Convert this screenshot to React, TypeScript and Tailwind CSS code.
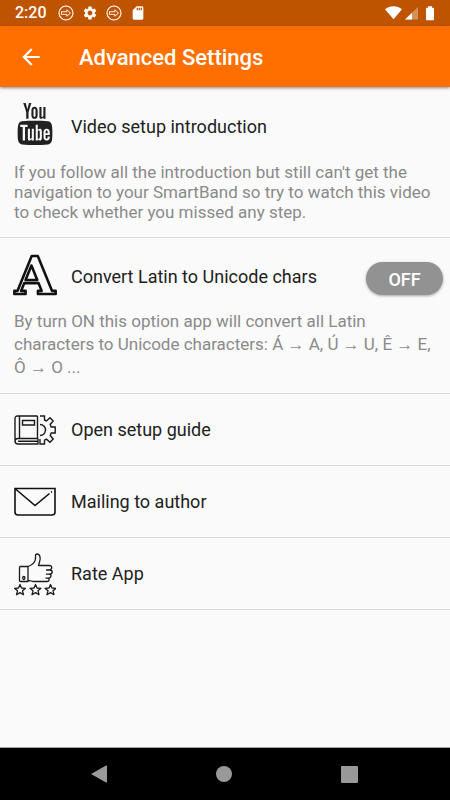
import type { ReactNode } from "react";
import { useState } from "react";
import { MdArrowBack, MdSdCard, MdSettings } from "react-icons/md";
import { TfiYoutube } from "react-icons/tfi";

function TransferIcon() {
  return (
    <svg viewBox="0 0 16 16" className="size-4" fill="none" stroke="white">
      <circle cx="8" cy="8" r="7" strokeWidth="1.1" />
      <path d="M3.5 6.7h5.3V4.8L12.5 8l-3.7 3.2V9.3H3.5z" strokeWidth="0.9" />
    </svg>
  );
}

function StatusBar() {
  return (
    <div className="flex h-[26px] items-center bg-[#bf5400] pr-[15px] pl-[15px] text-white">
      <span className="text-[16px] leading-none font-medium">2:20</span>
      <div className="ml-[11px] flex items-center gap-2">
        <TransferIcon />
        <MdSettings className="size-4" />
        <TransferIcon />
        <MdSdCard className="size-4" />
      </div>
      <svg viewBox="0 0 50 16" className="ml-auto h-4 w-[50px]" fill="white">
        <path d="M0 4.2C4.700 .2 12.300 .2 17 4.200L8.500 14.200z" />
        <path d="M33 2v12.500H20z" opacity=".35" />
        <path d="M27 7.800v6.700h-7z" />
        <path d="M43 1.200h4v1.500h1.200q.8 0 .8.800v11q0 .8-.8.800h-6.400q-.8 0-.8-.8v-11q0-.8.8-.8H43z" />
      </svg>
    </div>
  );
}

function LetterIcon() {
  return (
    <svg viewBox="0 0 42 42" className="size-[42px] overflow-visible">
      <text
        x="21"
        y="41"
        textAnchor="middle"
        fill="none"
        stroke="#111"
        strokeWidth="2.600"
        strokeLinejoin="round"
        className="font-['DejaVu_Serif'] text-[52px] font-bold"
      >
        A
      </text>
    </svg>
  );
}

function GuideIcon() {
  return (
    <svg viewBox="0 0 42 42" className="size-[42px]" fill="none" stroke="#1a1a1a" strokeWidth="1.400">
      <path d="M23.500 7H3.500Q1 7 1 9.500V32q0 3 3 3h20.500M5.500 7v22.500M23.500 7v22.500H4q-3 0-3 2.700M4 32.300h20M24 29.500V35" />
      <path d="M8.500 11.500h12v4.500h-12z" />
      <path d="M26 7h4.500v4l2 1 3.500-3.200 3.200 3.200-3 3.500 1 2.500h4v6h-4l-1 2.500 3 3.500-3.200 3.200-3.500-3-2 1v3.800H26V30" />
      <path d="M26 15.500a5.500 5.500 0 0 1 0 11" />
    </svg>
  );
}

function MailIcon() {
  return (
    <svg viewBox="0 0 42 42" className="size-[42px]" fill="none" stroke="#111" strokeWidth="1.600">
      <path d="M1 7.500h40V31q0 3-3 3H4q-3 0-3-3z" />
      <path d="M1.500 8 21 24.500l14.500-12M37 11.300l1-.8" />
    </svg>
  );
}

function RateIcon() {
  return (
    <svg viewBox="0 0 42 44" className="h-[44px] w-[42px]" fill="none" stroke="#1a1a1a" strokeWidth="1.300" strokeLinejoin="round">
      <path d="M6.500 14.500h7.500v15H6.500q-1 0-1-1v-13q0-1 1-1z" />
      <ellipse cx="9.800" cy="26" rx="1.100" ry="1.500" />
      <path d="M14 14.500c4-1.500 7-4 7.500-7.500V3.500q0-1.500 1.500-1.500c3 0 4 4 2.500 8l-1 3.500H35c3.500 0 3.500 4 .5 4.500h-3 3.500c3 .2 3 4-.5 4.200h-3 2.500c3 .2 2.500 3.800-.5 3.900h-2.500 1.500c2.500.2 2 3.400-.5 3.400H20c-2.500 0-3.500-1-6-1" />
      <path d="m6 32.500 1.500 3.500 4 .3-3 2.500 1 3.900L6 40.600l-3.500 2.100 1-3.900-3-2.500 4-.3z" />
      <path d="m21.500 32.500 1.500 3.500 4 .3-3 2.500 1 3.900-3.500-2.100-3.500 2.100 1-3.900-3-2.500 4-.3z" />
      <path d="m36.500 32.500 1.500 3.500 4 .3-3 2.500 1 3.900-3.500-2.100-3.500 2.100 1-3.900-3-2.500 4-.3z" />
    </svg>
  );
}

type RowProps = { icon: ReactNode; title: string };

function LinkRow({ icon, title }: RowProps) {
  return (
    <li className="border-b border-[#dadada]">
      <button type="button" className="flex h-[71px] w-full items-center gap-[15px] px-[14px] text-left">
        {icon}
        <span className="text-[18px]">{title}</span>
      </button>
    </li>
  );
}

export default function App() {
  const [convert, setConvert] = useState(false);

  return (
    <div className="flex min-h-screen flex-col bg-[#fafafa] font-[Roboto,sans-serif] text-[#212121]">
      <StatusBar />
      <header className="flex h-[61px] items-center bg-[#ff6f00] px-[18px] text-white shadow-[0_1px_3px_rgba(0,0,0,0.45)]">
        <button type="button" aria-label="Back">
          <MdArrowBack className="size-[26px]" />
        </button>
        <h1 className="ml-[35px] pt-[2px] text-[22px] font-medium">Advanced Settings</h1>
      </header>

      <main className="flex-1">
        <ul>
          <li className="border-b border-[#dadada] px-[14px] pt-4 pb-[15px]">
            <button type="button" className="flex w-full items-center gap-[15px] text-left">
              <TfiYoutube className="size-[42px]" />
              <span className="pt-1 text-[18px]">Video setup introduction</span>
            </button>
            <p className="mt-[17px] text-[17px] leading-5 text-[#8a8a8a]">
              If you follow all the introduction but still can't get the navigation to your SmartBand so try to watch
              this video to check whether you missed any step.
            </p>
          </li>

          <li className="border-b border-[#dadada] pt-[15px] pr-[7px] pb-[14px] pl-[14px]">
            <div className="flex items-center gap-[15px]">
              <LetterIcon />
              <span id="convert-label" className="flex-1 pt-1 text-[18px]">
                Convert Latin to Unicode chars
              </span>
              <button
                type="button"
                role="switch"
                aria-checked={convert}
                aria-labelledby="convert-label"
                onClick={() => setConvert(!convert)}
                className="mt-2 h-[33px] w-[77px] rounded-full bg-[#929292] pt-[2px] text-[18px] font-medium text-white shadow-[0_1px_3px_rgba(0,0,0,0.35)]"
              >
                {convert ? "ON" : "OFF"}
              </button>
            </div>
            <p className="mt-[15px] text-[17px] leading-[23px] text-[#8a8a8a]">
              By turn ON this option app will convert all Latin characters to Unicode characters: Á → A, Ú → U, Ê → E,
              Ô → O ...
            </p>
          </li>

          <LinkRow icon={<GuideIcon />} title="Open setup guide" />
          <LinkRow icon={<MailIcon />} title="Mailing to author" />
          <LinkRow icon={<RateIcon />} title="Rate App" />
        </ul>
      </main>

      <nav className="grid h-[53px] grid-cols-[1fr_50px_1fr] items-center border-t border-[#a0a0a0] bg-black pr-[92px] pl-[90px] text-[#999]">
        <button type="button" aria-label="Back">
          <svg viewBox="0 0 18 18" className="size-[18px]" fill="currentColor">
            <path d="M1 9 16 .5q1-.3 1 .5v16q0 .8-1 .5z" />
          </svg>
        </button>
        <button type="button" aria-label="Home" className="size-4 justify-self-center rounded-full bg-[#999]" />
        <button type="button" aria-label="Recent apps" className="size-[17px] justify-self-end rounded-[1px] bg-[#999]" />
      </nav>
    </div>
  );
}
